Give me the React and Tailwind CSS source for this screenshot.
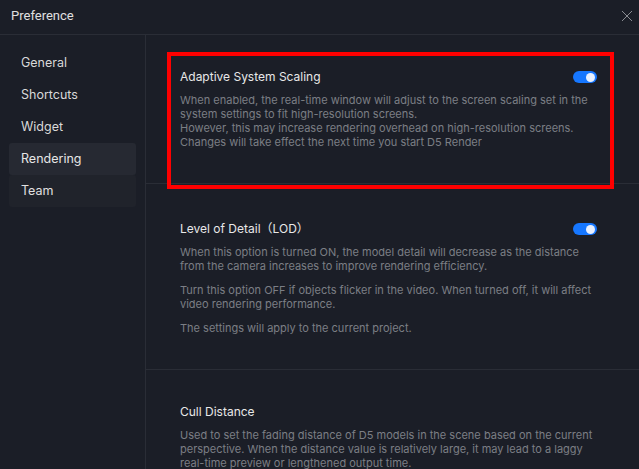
import React from "react";

function Toggle() {
  return (
    <div className="relative h-[12px] w-[24px] shrink-0 rounded-full bg-[#1677ff]">
      <div className="absolute right-[2px] top-[1.5px] h-[9px] w-[9px] rounded-full bg-[#e8f0ff]" />
    </div>
  );
}

const navItems = ["General", "Shortcuts", "Widget", "Rendering", "Team"];

export default function App() {
  return (
    <div
      className="flex h-[469px] w-[639px] flex-col overflow-hidden bg-[#1b1e27] text-[#d9d9d9]"
      style={{ fontFamily: "Inter, 'Noto Sans', 'Noto Sans CJK SC', sans-serif" }}
    >
      <div className="flex h-[35px] shrink-0 items-center justify-between border-b border-[#2a2d36] pb-[2px] pl-[11px] pr-[6px]">
        <span className="text-[13px] text-[#e0e0e0]" style={{ fontFamily: "Roboto, sans-serif" }}>Preference</span>
        <svg width="12" height="12" viewBox="0 0 12 12">
          <path d="M1 1 L11 11 M11 1 L1 11" stroke="#8a8c92" strokeWidth="1" />
        </svg>
      </div>
      <div className="flex min-h-0 flex-1">
        <div className="flex w-[146px] shrink-0 flex-col border-r border-[#2a2d36] px-[9px] pt-[12px]">
          {navItems.map((n) => (
            <div
              key={n}
              className={
                "flex h-[32px] items-center rounded-[3px] pl-[12px] text-[12.5px] " +
                (n === "Rendering" ? "bg-[#262932] text-[#e6e6e6]" : n === "Team" ? "bg-[#20232b] text-[#e0e0e0]" : "text-[#d9d9d9]")
              }
            >
              {n}
            </div>
          ))}
        </div>
        <div className="flex min-w-0 flex-1 flex-col">
          <div className="relative border-b border-[#2a2d36] pb-[34px] pl-[34px] pr-[42px] pt-[32px]">
            <div className="flex h-[20px] items-center justify-between">
              <span className="text-[12px] text-[#e8e8e8]">Adaptive System Scaling</span>
              <Toggle />
            </div>
            <div className="mt-[6px] text-[11px] leading-[14px] text-[#7b7e85]">
              <p>When enabled, the real-time window will adjust to the screen scaling set in the system settings to fit high-resolution screens.</p>
              <p>However, this may increase rendering overhead on high-resolution screens.</p>
              <p>Changes will take effect the next time you start D5 Render</p>
            </div>
            <div className="pointer-events-none absolute left-[21px] top-[17px] h-[137px] w-[447px] border-[4px] border-[#f00]" />
          </div>
          <div className="border-b border-[#2a2d36] pb-[34px] pl-[34px] pr-[42px] pt-[35px]">
            <div className="flex h-[20px] items-center justify-between">
              <span className="text-[12px] text-[#e8e8e8]">Level of Detail（LOD）</span>
              <Toggle />
            </div>
            <div className="mt-[6px] flex flex-col gap-[10px] text-[11px] leading-[14px] text-[#7b7e85]">
              <p>When this option is turned ON, the model detail will decrease as the distance from the camera increases to improve rendering efficiency.</p>
              <p>Turn this option OFF if objects flicker in the video. When turned off, it will affect video rendering performance.</p>
              <p>The settings will apply to the current project.</p>
            </div>
          </div>
          <div className="pb-[34px] pl-[34px] pr-[42px] pt-[32px]">
            <div className="flex h-[20px] items-center justify-between">
              <span className="text-[12px] text-[#e8e8e8]">Cull Distance</span>
            </div>
            <div className="mt-[6px] text-[11px] leading-[14px] text-[#7b7e85]">
              <p>Used to set the fading distance of D5 models in the scene based on the current perspective. When the distance value is relatively large, it may lead to a laggy real-time preview or lengthened output time.</p>
            </div>
          </div>
        </div>
      </div>
    </div>
  );
}
